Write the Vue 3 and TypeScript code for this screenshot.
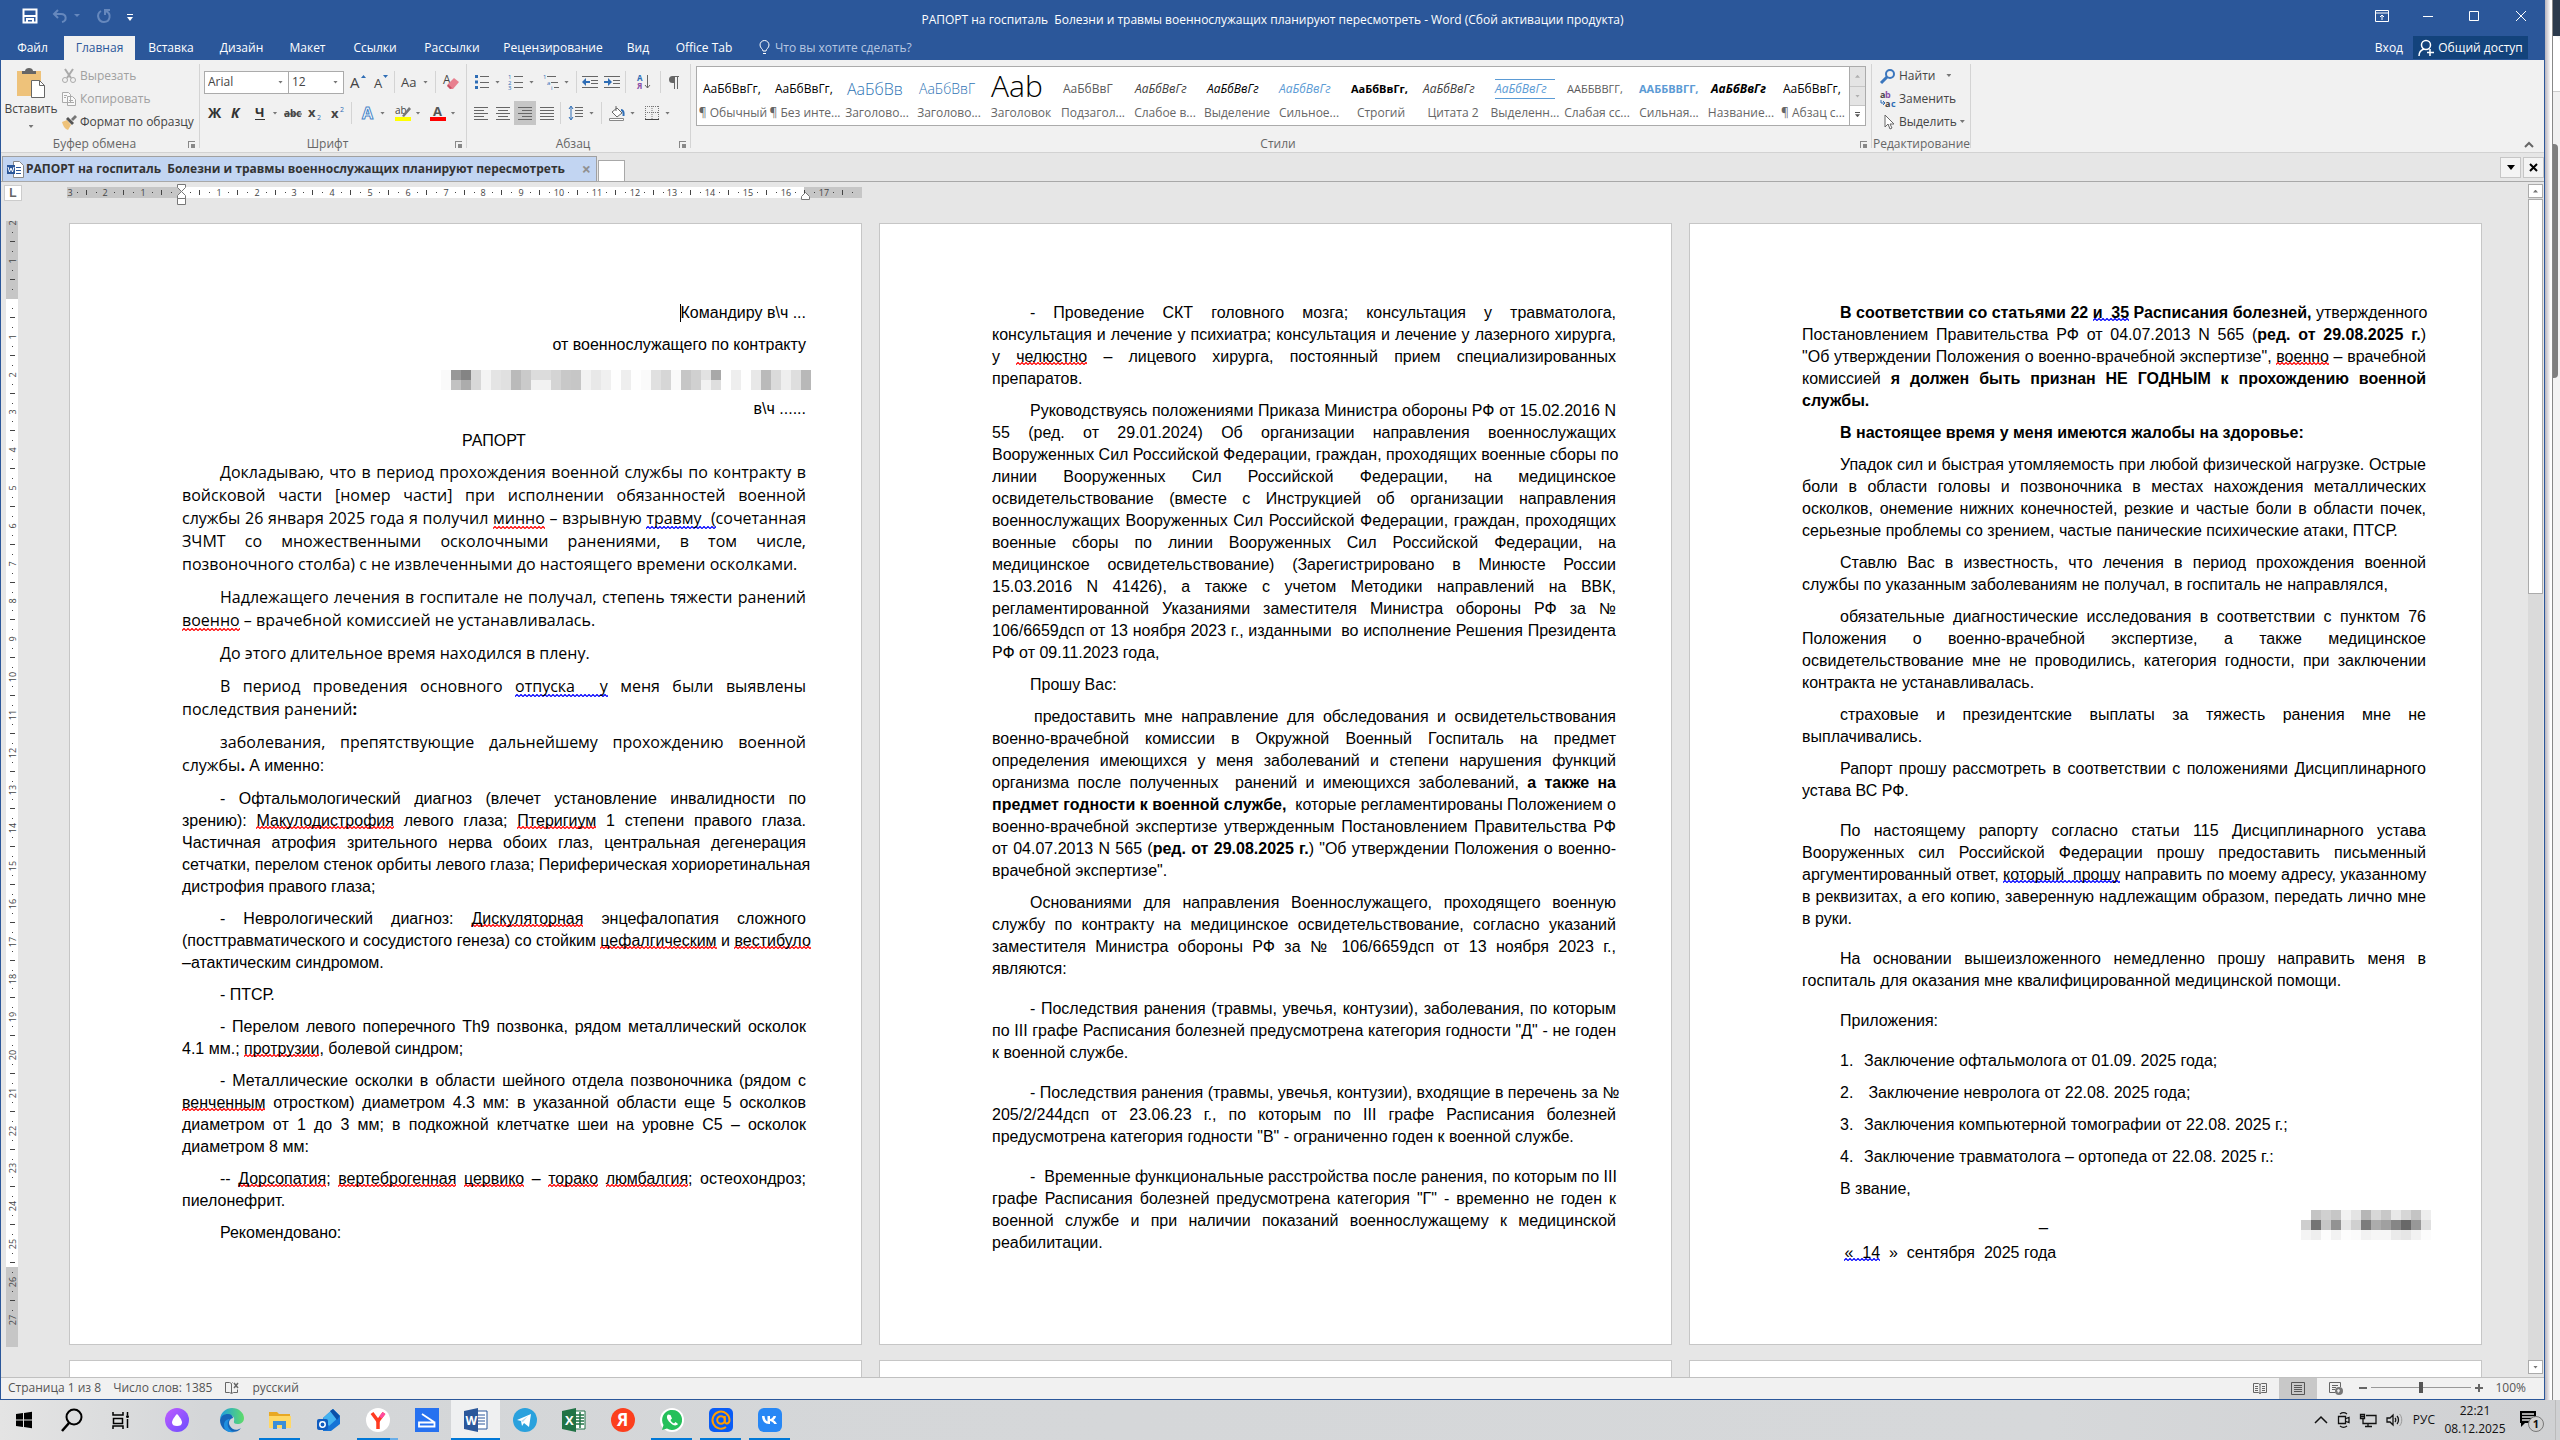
<script setup lang="ts">
import { ref } from 'vue'

interface Tool { icon?: string; w?: number; drop?: boolean; sep?: boolean; on?: boolean; label?: string }
interface Para { lines: string[]; kind?: string }
interface Seg { text: string; cls: string[] }

const docTitle = 'РАПОРТ на госпиталь\u00a0 Болезни и травмы военнослужащих планируют пересмотреть'
const tabs = ['Файл', 'Главная', 'Вставка', 'Дизайн', 'Макет', 'Ссылки', 'Рассылки', 'Рецензирование', 'Вид', 'Office Tab']
const zoom = ref(50)

const bars = (x1: number[], x2: number[]) =>
  x1.map((x, i) => `<path d="M${x} ${2.5 + i * 3}H${x2[i]}" stroke="#666"/>`).join('')

const icons: Record<string, string> = {
  grow: '<text x="0" y="14" font-size="15" fill="#444">A</text><path d="M11 4l2.500-3 2.500 3z" fill="#2e6db5"/>',
  shrink: '<text x="1" y="14" font-size="13" fill="#444">A</text><path d="M10 1h5l-2.500 3z" fill="#2e6db5"/>',
  case: '<text x="-1" y="13" font-size="13" fill="#444">Aa</text>',
  erase: '<text x="0" y="10" font-size="12" fill="#444">A</text><path d="M5 10l6-6 5 4-6 7-3 0z" fill="#e8808f"/><path d="M5 10l4 4-2 1-3-3z" fill="#c94f63"/>',
  bold: '<text x="1" y="13" font-size="14" font-weight="700" fill="#333">Ж</text>',
  italic: '<text x="3" y="13" font-size="14" font-weight="700" font-style="italic" fill="#333">К</text>',
  under: '<text x="3" y="12" font-size="13" font-weight="700" fill="#333">Ч</text><path d="M3 14.500h10" stroke="#333"/>',
  strike: '<text x="-1" y="12" font-size="10" font-weight="700" fill="#444">abc</text><path d="M-1 9h18" stroke="#444"/>',
  sub: '<text x="1" y="12" font-size="13" font-weight="700" fill="#444">x</text><text x="10" y="15" font-size="7" fill="#2e6db5">2</text>',
  sup: '<text x="1" y="13" font-size="13" font-weight="700" fill="#444">x</text><text x="10" y="7" font-size="7" fill="#2e6db5">2</text>',
  effect: '<text x="3" y="14" font-size="16" font-weight="700" fill="#fff" stroke="#4a86c8" stroke-width="1">A</text>',
  mark: '<text x="0" y="9" font-size="10" fill="#444">ab</text><path d="M7 11l7-9 2 2-7 8z" fill="#777"/><path d="M0 12h16v4H0z" fill="#ff0"/>',
  color: '<text x="3" y="11" font-size="13" font-weight="700" fill="#555">A</text><path d="M0 12h16v4H0z" fill="#f00"/>',
  bullets: '<g fill="#2e6db5"><path d="M1 1h3v3H1zM1 6.500h3v3H1zM1 12h3v3H1z"/></g><path d="M6 2.500h9M6 8.500h9M6 13.500h9" stroke="#666"/>',
  numbers: '<g font-size="6" fill="#2e6db5"><text x="0" y="5">1</text><text x="0" y="11">2</text><text x="0" y="16">3</text></g><path d="M6 2.500h9M6 8.500h9M6 13.500h9" stroke="#666"/>',
  multi: '<g font-size="6" fill="#2e6db5"><text x="0" y="5">1</text><text x="4" y="11">a</text><text x="8" y="16">i</text></g><path d="M4 2.500h9M8 8.500h7M11 13.500h5" stroke="#666"/>',
  dedent: '<path d="M0 2.500h16M9 6.500h7M9 9.500h7M0 13.500h16" stroke="#666"/><path d="M0 8l4-4v3h4v2H4v3z" fill="#2e6db5"/>',
  indent: '<path d="M0 2.500h16M9 6.500h7M9 9.500h7M0 13.500h16" stroke="#666"/><path d="M8 8L4 4v3H0v2h4v3z" fill="#2e6db5"/>',
  sort: '<text x="2" y="7" font-size="8" font-weight="700" fill="#2e6db5">А</text><text x="2" y="15" font-size="8" font-weight="700" fill="#8a4fa8">Я</text><path d="M12.500 1v13M10 11l2.500 3 2.500-3" stroke="#666" fill="none"/>',
  pilcrow: '<path d="M13 2H6.500a3.500 3.500 0 0 0 0 7H8v6h1V3h2v12h1V3h1z" fill="#666"/>',
  left: bars([1, 1, 1, 1, 1], [15, 11, 15, 11, 15]),
  center: bars([1, 3, 1, 3, 1], [15, 13, 15, 13, 15]),
  right: bars([1, 5, 1, 5, 1], [15, 15, 15, 15, 15]),
  justify: bars([1, 1, 1, 1, 1], [15, 15, 15, 15, 15]),
  spacing: '<path d="M3 2v12M1 4l2-3 2 3M1 12l2 3 2-3" stroke="#2e6db5" fill="none"/><path d="M7 2.500h8M7 5.500h8M7 8.500h8M7 11.500h8" stroke="#666"/>',
  bucket: '<path d="M7 1v5M3 7l5-4 5 5-5 4z" stroke="#666" fill="#fff"/><path d="M12 5c2 0 3 2 2.500 6" stroke="#2e6db5" stroke-width="2" fill="none"/><path d="M.5 13.500h14v2H.5z" stroke="#888" fill="#fff"/>',
  border: '<path d="M1.500 1v13M8 1v13M14.500 1v13M1 1.500h14M1 7.500h14" stroke="#777" stroke-dasharray="1 1"/><path d="M1 14.500h14" stroke="#444"/>',
  cut: '<path d="M4 1l6 9M12 1L6 10" stroke="#aaa" stroke-width="2"/><circle cx="4" cy="12" r="2.500" fill="none" stroke="#aaa"/><circle cx="12" cy="12" r="2.500" fill="none" stroke="#aaa"/>',
  copy: '<path d="M1.500 1.500h6l2 2v8h-8zM6.500 5.500h5l3 3v6h-8z" fill="#f8f8f8" stroke="#aaa"/><path d="M8 9.500h4M8 11.500h5M3 4.500h3M3 6.500h2" stroke="#aaa"/>',
  brush: '<path d="M1 8l5-2 4 5-3 5c-3-1-5-4-6-8z" fill="#eec27a"/><path d="M5 5l2-2 6 6-2 2z" fill="#555"/><path d="M10 5l4-4 2 2-4 4z" fill="#777"/>',
  find: '<circle cx="10" cy="6" r="4" fill="none" stroke="#3a76bd" stroke-width="2"/><path d="M7 9l-6 6" stroke="#3a76bd" stroke-width="3"/>',
  replace: '<text x="0" y="7" font-size="9" font-weight="700" fill="#444">a</text><text x="5" y="7" font-size="9" font-weight="700" fill="#8a4fa8">b</text><text x="5" y="16" font-size="9" font-weight="700" fill="#444">a</text><text x="11" y="16" font-size="9" font-weight="700" fill="#2e6db5">c</text><path d="M1 9v3h3M3 10l2 2-2 2" stroke="#2e6db5" fill="none"/>',
  select: '<path d="M5 1v12l3-3 2 5 2-1-2-4h4z" fill="#fff" stroke="#666"/>',
}

const fontRow1: Tool[] = [
  { icon: 'grow', w: 23, label: 'Увеличить' }, { icon: 'shrink', w: 23, label: 'Уменьшить' }, { sep: true },
  { icon: 'case', w: 36, drop: true, label: 'Регистр' }, { sep: true }, { icon: 'erase', w: 26, label: 'Очистить' },
]
const fontRow2: Tool[] = [
  { icon: 'bold', w: 21 }, { icon: 'italic', w: 22 }, { icon: 'under', w: 35, drop: true }, { icon: 'strike', w: 22 },
  { icon: 'sub', w: 22 }, { icon: 'sup', w: 23 }, { sep: true }, { icon: 'effect', w: 36, drop: true },
  { icon: 'mark', w: 35, drop: true }, { icon: 'color', w: 35, drop: true },
]
const paraRow1: Tool[] = [
  { icon: 'bullets', w: 34, drop: true }, { icon: 'numbers', w: 34, drop: true }, { icon: 'multi', w: 36, drop: true }, { sep: true },
  { icon: 'dedent', w: 22 }, { icon: 'indent', w: 22 }, { sep: true }, { icon: 'sort', w: 30 }, { sep: true }, { icon: 'pilcrow', w: 22 },
]
const paraRow2: Tool[] = [
  { icon: 'left', w: 22 }, { icon: 'center', w: 22 }, { icon: 'right', w: 22, on: true }, { icon: 'justify', w: 22 }, { sep: true },
  { icon: 'spacing', w: 36, drop: true }, { sep: true }, { icon: 'bucket', w: 36, drop: true }, { icon: 'border', w: 34, drop: true },
]
const styles = [
  ['АаБбВвГг,', '¶ Обычный', ''], ['АаБбВвГг,', '¶ Без инте...', ''], ['АаБбВв', 'Заголово...', 'h1'], ['АаБбВвГ', 'Заголово...', 'h2'],
  ['Ааb', 'Заголовок', 'title'], ['АаБбВвГ', 'Подзагол...', 'grey'], ['АаБбВвГг', 'Слабое в...', 'it soft'], ['АаБбВвГг', 'Выделение', 'it'],
  ['АаБбВвГг', 'Сильное...', 'it blue'], ['АаБбВвГг,', 'Строгий', 'b small'], ['АаБбВвГг', 'Цитата 2', 'it soft'], ['АаБбВвГг', 'Выделенн...', 'it blue lines'],
  ['ААББВВГГ,', 'Слабая сс...', 'grey small'], ['ААББВВГГ,', 'Сильная...', 'blue b small'], ['АаБбВвГг', 'Название...', 'it b'], ['АаБбВвГг,', '¶ Абзац с...', ''],
]

/* Inline marks: ~spelling~, ^grammar^, *bold*, #Arial# */
function parse(line: string): Seg[] {
  const state: Record<string, boolean> = { '~': false, '^': false, '*': false, '#': false }
  const name: Record<string, string> = { '~': 'spell', '^': 'gram', '*': 'bold', '#': 'arial' }
  const out: Seg[] = []
  for (const part of line.split(/([~^*#])/)) {
    if (part in state) state[part] = !state[part]
    else if (part) out.push({ text: part.replace(/ {2}/g, '\u00a0 '), cls: Object.keys(state).filter(k => state[k]).map(k => name[k]) })
  }
  return out
}

const page1: Para[] = [
  { kind: 'loose', lines: ['Докладываю, что в период прохождения военной службы по контракту в', 'войсковой части [номер части] при исполнении обязанностей военной', 'службы 26 января 2025 года я получил ~минно~ – взрывную ^травму  (^сочетанная', 'ЗЧМТ со множественными осколочными ранениями, в том числе,', 'позвоночного столба) с не извлеченными до настоящего времени осколками.'] },
  { kind: 'loose', lines: ['Надлежащего лечения в госпитале не получал, степень тяжести ранений', '~военно~ – врачебной комиссией не устанавливалась.'] },
  { kind: 'loose', lines: ['До этого длительное время находился в плену.'] },
  { kind: 'loose', lines: ['В период проведения основного ^отпуска   у^ меня были выявлены', 'последствия ранений*:*'] },
  { kind: 'loose last', lines: ['заболевания, препятствующие дальнейшему прохождению военной', 'службы*.* #А именно:#'] },
  { lines: ['- Офтальмологический диагноз (влечет установление инвалидности по', 'зрению): ~Макулодистрофия~ левого глаза; ~Птеригиум~ 1 степени правого глаза.', 'Частичная атрофия зрительного нерва обоих глаз, центральная дегенерация', 'сетчатки, перелом стенок орбиты левого глаза; Периферическая хориоретинальная', 'дистрофия правого глаза;'] },
  { lines: ['- Неврологический диагноз: ~Дискуляторная~ энцефалопатия сложного', '(посттравматического и сосудистого генеза) со стойким ~цефалгическим~ и ~вестибуло~', '–атактическим синдромом.'] },
  { lines: ['- ПТСР.'] },
  { lines: ['- Перелом левого поперечного Th9 позвонка, рядом металлический осколок', '4.1 мм.; ~протрузии~, болевой синдром;'] },
  { lines: ['- Металлические осколки в области шейного отдела позвоночника (рядом с', '~венченным~ отростком) диаметром 4.3 мм: в указанной области еще 5 осколков', 'диаметром от 1 до 3 мм; в подкожной клетчатке шеи на уровне С5 – осколок', 'диаметром 8 мм:'] },
  { lines: ['-- ~Дорсопатия~; ~вертеброгенная~ ~цервико~ – ~торако~ ~люмбалгия~; остеохондроз;', 'пиелонефрит.'] },
  { lines: ['Рекомендовано:'] },
]
const page2: Para[] = [
  { lines: ['- Проведение СКТ головного мозга; консультация у травматолога,', 'консультация и лечение у психиатра; консультация и лечение у лазерного хирурга,', 'у ~челюстно~ – лицевого хирурга, постоянный прием специализированных', 'препаратов.'] },
  { lines: ['Руководствуясь положениями Приказа Министра обороны РФ от 15.02.2016 N', '55 (ред. от 29.01.2024) Об организации направления военнослужащих', 'Вооруженных Сил Российской Федерации, граждан, проходящих военные сборы по', 'линии Вооруженных Сил Российской Федерации, на медицинское', 'освидетельствование (вместе с Инструкцией об организации направления', 'военнослужащих Вооруженных Сил Российской Федерации, граждан, проходящих', 'военные сборы по линии Вооруженных Сил Российской Федерации, на', 'медицинское освидетельствование) (Зарегистрировано в Минюсте России', '15.03.2016 N 41426), а также с учетом Методики направлений на ВВК,', 'регламентированной Указаниями заместителя Министра обороны РФ за №', '106/6659дсп от 13 ноября 2023 г., изданными  во исполнение Решения Президента', 'РФ от 09.11.2023 года,'] },
  { lines: ['Прошу Вас:'] },
  { lines: ['\u2005предоставить мне направление для обследования и освидетельствования', 'военно-врачебной комиссии в Окружной Военный Госпиталь на предмет', 'определения имеющихся у меня заболеваний и степени нарушения функций', 'организма после полученных  ранений и имеющихся заболеваний, *а также на*', '*предмет годности к военной службе,*  которые регламентированы Положением о', 'военно-врачебной экспертизе утвержденным Постановлением Правительства РФ', 'от 04.07.2013 N 565 (*ред. от 29.08.2025 г.*) "Об утверждении Положения о военно-', 'врачебной экспертизе".'] },
  { kind: 'wide', lines: ['Основаниями для направления Военнослужащего, проходящего военную', 'службу по контракту на медицинское освидетельствование, согласно указаний', 'заместителя Министра обороны РФ за № 106/6659дсп от 13 ноября 2023 г.,', 'являются:'] },
  { kind: 'wide', lines: ['- Последствия ранения (травмы, увечья, контузии), заболевания, по которым', 'по III графе Расписания болезней предусмотрена категория годности "Д" - не годен', 'к военной службе.'] },
  { kind: 'wide', lines: ['- Последствия ранения (травмы, увечья, контузии), входящие в перечень за №', '205/2/244дсп от 23.06.23 г., по которым по III графе Расписания болезней', 'предусмотрена категория годности "В" - ограниченно годен к военной службе.'] },
  { lines: ['-  Временные функциональные расстройства после ранения, по которым по III', 'графе Расписания болезней предусмотрена категория "Г" - временно не годен к', 'военной службе и при наличии показаний военнослужащему к медицинской', 'реабилитации.'] },
]
const page3: Para[] = [
  { lines: ['*В соответствии со статьями 22 ^и  35^ Расписания болезней,* утвержденного', 'Постановлением Правительства РФ от 04.07.2013 N 565 (*ред. от 29.08.2025 г.*)', '"Об утверждении Положения о военно-врачебной экспертизе", ~военно~ – врачебной', 'комиссией *я должен быть признан НЕ ГОДНЫМ к прохождению военной*', '*службы.*'] },
  { lines: ['*В настоящее время у меня имеются жалобы на здоровье:*'] },
  { lines: ['Упадок сил и быстрая утомляемость при любой физической нагрузке. Острые', 'боли в области головы и позвоночника в местах нахождения металлических', 'осколков, онемение нижних конечностей, резкие и частые боли в области почек,', 'серьезные проблемы со зрением, частые панические психические атаки, ПТСР.'] },
  { lines: ['Ставлю Вас в известность, что лечения в период прохождения военной', 'службы по указанным заболеваниям не получал, в госпиталь не направлялся,'] },
  { lines: ['обязательные диагностические исследования в соответствии с пунктом 76', 'Положения о военно-врачебной экспертизе, а также медицинское', 'освидетельствование мне не проводились, категория годности, при заключении', 'контракта не устанавливалась.'] },
  { lines: ['страховые и президентские выплаты за тяжесть ранения мне не', 'выплачивались.'] },
  { kind: 'wide', lines: ['Рапорт прошу рассмотреть в соответствии с положениями Дисциплинарного', 'устава ВС РФ.'] },
  { kind: 'wide', lines: ['По настоящему рапорту согласно статьи 115 Дисциплинарного устава', 'Вооруженных сил Российской Федерации прошу предоставить письменный', 'аргументированный ответ, ^который  прошу^ направить по моему адресу, указанному', 'в реквизитах, а его копию, заверенную надлежащим образом, передать лично мне', 'в руки.'] },
  { kind: 'wide', lines: ['На основании вышеизложенного немедленно прошу направить меня в', 'госпиталь для оказания мне квалифицированной медицинской помощи.'] },
  { kind: 'wide', lines: ['Приложения:'] },
]
const pages = [page1, page2, page3]
const attachments = ['Заключение офтальмолога от 01.09. 2025 года;', '\u00a0Заключение невролога от 22.08. 2025 года;', 'Заключения компьютерной томографии от 22.08. 2025 г.;', 'Заключение травматолога – ортопеда от 22.08. 2025 г.:']

const shade = (row: string) => row.split(' ').map(h => `#${h}${h}${h}`)
const mosaicName = [
  shade('fa 98 84 d8 f4 e4 e0 ba ca dc dc d4 c8 c6 f2 e8 f0 fe ee fe fa e0 d6 fa c6 d0 e2 a8 fe ee fe e8 ba da ee de b8'),
  shade('fa c2 ac d8 f4 e4 e0 ba ca f2 f2 d4 c8 c6 f2 e8 f0 fe ee fe fa e0 d6 fa c6 d0 f2 de fe ee fe e8 ba da ee de b8'),
]
const mosaicSign = [
  shade('ff c4 d0 c6 f2 e4 b6 d8 c8 e8 d6 c4 ee'),
  shade('ce 74 c6 92 e6 d0 7c ac a0 86 68 98 e0'),
  shade('f4 ee fc f2 fd fb f2 f6 f6 ea e6 f2 fc'),
]

const CM = 37.8
const hTicks = Array.from({ length: 21 }, (_, i) => i - 3)
const vTicks = Array.from({ length: 30 }, (_, i) => i - 2)

const apps = [
  { id: 'start', run: '' }, { id: 'search', run: '' }, { id: 'tasks', run: '' }, { id: 'alice', run: '' }, { id: 'edge', run: '' },
  { id: 'folder', run: 'run' }, { id: 'outlook', run: '' }, { id: 'browser', run: 'run multi' }, { id: 'scan', run: '' }, { id: 'word', run: 'run active' },
  { id: 'telegram', run: '' }, { id: 'excel', run: '' }, { id: 'yandex', run: '' }, { id: 'whatsapp', run: 'run' }, { id: 'mail', run: 'run' }, { id: 'vk', run: 'run' },
]
const appIcons: Record<string, string> = {
  start: '<path d="M4 6l7-1v6.500H4zM12 5l8-1.200v7.700h-8zM4 12.500h7V19l-7-1zM12 12.500h8v7.700L12 19z" fill="#000"/>',
  search: '<circle cx="14" cy="9" r="7.500" fill="none" stroke="#000" stroke-width="2"/><path d="M9 15l-7 8" stroke="#000" stroke-width="2.500"/>',
  tasks: '<path d="M4 4v3h10V4M4.500 10.500h9v5h-9zM4 21v-3h10v3" fill="none" stroke="#000" stroke-width="1.500"/><path d="M18.500 4v3M18.500 11v9" stroke="#000" stroke-width="1.500"/><circle cx="18.500" cy="8.500" r="1.500"/>',
  alice: '<defs><linearGradient id="al" x1="0" y1="0" x2="1" y2="1"><stop offset="0" stop-color="#c05cff"/><stop offset="1" stop-color="#6a4dff"/></linearGradient></defs><circle cx="12" cy="12" r="12" fill="url(#al)"/><path d="M12 6c2 2 5 6 5 8.500S15 18 12 18s-5-1-5-3.500S10 8 12 6z" fill="#fff"/>',
  edge: '<defs><linearGradient id="ed" x1="0" y1="0" x2="1" y2="0"><stop offset="0" stop-color="#1b9de2"/><stop offset="1" stop-color="#5fdc68"/></linearGradient></defs><path d="M0 11C1 4 6 0 12 0c7 0 12 5 12 10 0 4-3 6-6.500 6-3 0-4-1-3.500-3 1-3-1-6-5-6-5 0-8 3-9 4z" fill="url(#ed)"/><path d="M0 12c1-4 4-6 8-6 3 0 5 2 5 4-4 1-5 5-3 8 2 4 7 5 11 2-2 3-5 4-9 4C5 24 0 19 0 12z" fill="#1565b8"/><path d="M10 11c-4 3-3 11 4 13-7 1-10-2-10-7 0-4 3-6 6-6z" fill="#1f8fe0"/>',
  folder: '<path d="M1 4h8l2 2h11v14H1z" fill="#e8a824"/><path d="M1 8h22v12H1z" fill="#ffd866"/><path d="M5 21v-8h13v8h-4v-4H9v4z" fill="#3b8fd9"/>',
  outlook: '<path d="M6 10L16 1l7 7v8l-9 7H6z" fill="#1673d6"/><path d="M6 10L16 1l7 7-11 10z" fill="#43b2f0"/><path d="M13 3l3-2 7 7-3 4z" fill="#0a4fa8"/><rect x="0" y="11" width="11" height="11" rx="2" fill="#0f5cc0"/><circle cx="5.500" cy="16.500" r="2.700" fill="none" stroke="#fff" stroke-width="1.500"/>',
  browser: '<circle cx="12" cy="12" r="12" fill="#fff"/><path d="M6 5l6 8 6-8" fill="none" stroke="#ff3b21" stroke-width="3.500"/><path d="M12 12v9" stroke="#ff3b21" stroke-width="3.500"/><path d="M14.500 9.500l3.500-4.500" stroke="#ff4ba0" stroke-width="3.500"/>',
  scan: '<path d="M0 0h24v24H0z" fill="#2671f0"/><path d="M7 6l12 8M4 14.500h15.500v4H4z" stroke="#fff" stroke-width="1.800" fill="none"/>',
  word: '<path d="M13 3h10v18H13z" fill="#fff" stroke="#2b579a"/><path d="M14 7h7M14 10h7M14 13h7M14 16h7" stroke="#2b579a"/><path d="M0 3l14-3v24L0 21z" fill="#2b579a"/><text x="1.500" y="17" font-size="12" font-weight="700" fill="#fff">W</text>',
  telegram: '<circle cx="12" cy="12" r="12" fill="#2aa1dd"/><path d="M4 12l14-6-2 13-5-4-2 3-1-5z" fill="#fff"/><path d="M8 13l7-5-5 6z" fill="#b8d9ee"/>',
  excel: '<path d="M13 3h10v18H13z" fill="#fff" stroke="#217346"/><path d="M14 7h8M14 10h8M14 13h8M14 16h8M18 4v16" stroke="#217346" stroke-width="1.500"/><path d="M0 3l14-3v24L0 21z" fill="#217346"/><text x="3" y="17" font-size="13" font-weight="700" fill="#fff">X</text>',
  yandex: '<circle cx="12" cy="12" r="12" fill="#fc3f1d"/><text x="6" y="18" font-size="17" font-weight="700" fill="#fff">Я</text>',
  whatsapp: '<circle cx="12" cy="12" r="12" fill="#fff"/><path d="M2 22l1.500-5A10 10 0 1 1 7 20.500z" fill="#25c05a"/><path d="M8 6.500c-2 2-1 5 2 8s6 4 8 1.500l-2.500-2-1.500 1.500c-2-1-3-2-3.500-3.500L12 10.500l-1.500-3.500z" fill="#fff"/>',
  mail: '<rect width="24" height="24" rx="5" fill="#0a5cf5"/><circle cx="12" cy="12" r="3.800" fill="none" stroke="#ff9e00" stroke-width="2"/><path d="M15.800 8v5c0 4 4.700 3 4.700-1a8.500 8.500 0 1 0-3.500 7" fill="none" stroke="#ff9e00" stroke-width="2"/>',
  vk: '<rect width="24" height="24" rx="6" fill="#2787f5"/><path d="M4 8h2.500c.3 3 1.500 5 3 5.500V8h2.500v3c1.500 0 3-1.500 3.500-3H18c-.3 2-1.500 3.500-2.700 4 1.500.7 2.700 2 3.700 4h-2.800c-.7-1.500-2-2.500-4.200-3v3h-1C7 16 4.200 13 4 8z" fill="#fff"/>',
}
</script>

<template>
  <div class="screen">
    <div class="desk">
      <main class="window">
        <header class="titlebar">
          <div class="title-row">
            <div class="qat">
              <button aria-label="Сохранить"><svg width="16" height="16"><path d="M1.500 1.500h13v13h-13z" fill="none" stroke="#fff" stroke-width="2" /><path d="M2 8h12M5 15v-4h6v4" stroke="#fff" stroke-width="2" fill="none" /></svg></button>
              <button aria-label="Отменить"><svg width="30" height="16"><path d="M6 2L2 6l4 4M2 6h7c6 0 6 7 1 8" fill="none" stroke="#6688bd" stroke-width="2" /><path d="M22 6h6l-3 3z" fill="#6688bd" /></svg></button>
              <button aria-label="Повторить"><svg width="16" height="16"><path d="M5 3C0 6 2 14 8 14s8-8 2-11M9 7V2h5" fill="none" stroke="#6688bd" stroke-width="2" /></svg></button>
              <button aria-label="Настроить"><svg width="8" height="16"><path d="M1 6.500h6" stroke="#fff" /><path d="M1 9h6l-3 4z" fill="#fff" /></svg></button>
            </div>
            <h1>{{ docTitle }} - Word (Сбой активации продукта)</h1>
            <div class="winbtns">
              <button aria-label="Параметры ленты"><svg width="14" height="12"><path d="M.5.500h13v11H.5zM.5 3h13M7 10V5M5 7l2-2 2 2" fill="none" stroke="#fff" /></svg></button>
              <button aria-label="Свернуть"><svg width="12" height="12"><path d="M1 6.500h10" stroke="#fff" /></svg></button>
              <button aria-label="Развернуть"><svg width="12" height="12"><path d="M1.500 1.500h9v9h-9z" fill="none" stroke="#fff" /></svg></button>
              <button aria-label="Закрыть"><svg width="12" height="12"><path d="M1 1l10 10M11 1L1 11" stroke="#fff" /></svg></button>
            </div>
          </div>
          <div class="tab-row">
            <nav class="tabs">
              <button v-for="(t, i) in tabs" :key="t" :class="{ active: i === 1 }">{{ t }}</button>
            </nav>
            <label class="tell">
              <svg width="12" height="16"><path d="M4 11c0-2-3-3-3-6a4.500 4.500 0 0 1 9 0c0 3-3 4-3 6zM4 13.500h3" fill="none" stroke="#fff" /></svg>
              <input type="text" placeholder="Что вы хотите сделать?" aria-label="Что вы хотите сделать?" />
            </label>
            <button class="login">Вход</button>
            <button class="share"><svg width="16" height="18"><circle cx="8" cy="6" r="4.500" fill="none" stroke="#fff" stroke-width="1.500" /><path d="M1 17c0-4 2-6 5-7M12 10v7M9 13.500h7" fill="none" stroke="#fff" stroke-width="1.500" /></svg>Общий доступ</button>
          </div>
        </header>

        <section class="ribbon">
          <div class="group clip">
            <div class="clip-body">
              <button class="paste">
                <svg width="30" height="32"><path d="M1 4h24v25H1z" fill="#eec27a" /><path d="M6 7V4h3c0-4 8-4 8 0h3v3z" fill="#666" /><path d="M15.500 13.500h8l5 5v12h-13z" fill="#fff" stroke="#666" /><path d="M23.500 13.500v5h5" fill="none" stroke="#666" /></svg>
                <span>Вставить</span><i class="arr"></i>
              </button>
              <div class="stack">
                <button class="dim"><svg width="16" height="16" v-html="icons.cut" />Вырезать</button>
                <button class="dim"><svg width="16" height="16" v-html="icons.copy" />Копировать</button>
                <button><svg width="16" height="16" v-html="icons.brush" />Формат по образцу</button>
              </div>
            </div>
            <footer><span>Буфер обмена</span><i class="launch"></i></footer>
          </div>

          <div class="group font">
            <div class="rows">
              <div class="row">
                <span class="combo name"><select aria-label="Шрифт"><option>Arial</option></select><i class="arr"></i></span>
                <span class="combo size"><select aria-label="Размер"><option>12</option></select><i class="arr"></i></span>
                <template v-for="(b, i) in fontRow1" :key="i">
                  <i v-if="b.sep" class="sep"></i>
                  <button v-else class="tool" :aria-label="b.icon" :style="{ width: b.w + 'px' }"><svg width="16" height="16" v-html="icons[b.icon!]" /><i v-if="b.drop" class="arr"></i></button>
                </template>
              </div>
              <div class="row">
                <template v-for="(b, i) in fontRow2" :key="i">
                  <i v-if="b.sep" class="sep"></i>
                  <button v-else class="tool" :aria-label="b.icon" :style="{ width: b.w + 'px' }"><svg width="16" height="16" v-html="icons[b.icon!]" /><i v-if="b.drop" class="arr"></i></button>
                </template>
              </div>
            </div>
            <footer><span>Шрифт</span><i class="launch"></i></footer>
          </div>

          <div class="group para">
            <div class="rows">
              <div v-for="(r, k) in [paraRow1, paraRow2]" :key="k" class="row">
                <template v-for="(b, i) in r" :key="i">
                  <i v-if="b.sep" class="sep"></i>
                  <button v-else class="tool" :class="{ on: b.on }" :aria-label="b.icon" :style="{ width: b.w + 'px' }"><svg width="16" height="16" v-html="icons[b.icon!]" /><i v-if="b.drop" class="arr"></i></button>
                </template>
              </div>
            </div>
            <footer><span>Абзац</span><i class="launch"></i></footer>
          </div>

          <div class="group styles">
            <div class="gallery">
              <button v-for="(s, i) in styles" :key="i" class="style"><span class="sample" :class="s[2]">{{ s[0] }}</span><span class="cap">{{ s[1] }}</span></button>
              <div class="gscroll"><button aria-label="Вверх"><i class="arr up"></i></button><button aria-label="Вниз"><i class="arr"></i></button><button aria-label="Все стили" class="more"><i class="arr"></i></button></div>
            </div>
            <footer><span>Стили</span><i class="launch"></i></footer>
          </div>

          <div class="group edit">
            <div class="stack">
              <button><svg width="16" height="16" v-html="icons.find" />Найти<i class="arr gap"></i></button>
              <button><svg width="16" height="16" v-html="icons.replace" />Заменить</button>
              <button><svg width="16" height="16" v-html="icons.select" />Выделить<i class="arr"></i></button>
            </div>
            <footer><span>Редактирование</span></footer>
          </div>
          <button class="collapse" aria-label="Свернуть ленту"><svg width="10" height="8"><path d="M1 7l4-4 4 4" fill="none" stroke="#666" stroke-width="2" /></svg></button>
        </section>

        <div class="doctabs">
          <div class="doctab">
            <svg width="17" height="17"><path d="M6.500.500h6l4 4v12h-10z" fill="#fff" stroke="#888" /><path d="M9 6.500h5M9 9.500h5M9 12.500h5" stroke="#2b579a" /><path d="M0 4h8v9H0z" fill="#2b579a" /><path d="M1 6l1.500 5L4 7l1.500 4L7 6" fill="none" stroke="#fff" /></svg>
            <span>{{ docTitle }}</span><button aria-label="Закрыть вкладку">×</button>
          </div>
          <button class="newtab" aria-label="Новая вкладка"></button>
          <div class="tabctl"><button aria-label="Список"><svg width="8" height="5"><path d="M0 0h8L4 5z" /></svg></button><button aria-label="Закрыть"><svg width="9" height="9"><path d="M1 1l7 7M8 1L1 8" stroke="#000" stroke-width="2" /></svg></button></div>
        </div>

        <section class="work">
          <div class="vruler">
            <button class="tabsel" aria-label="Табуляция">L</button>
            <svg class="vr" width="12" height="1126">
              <rect width="12" height="78" fill="#c6c6c6" /><rect y="78" width="12" height="968" fill="#fff" /><rect y="1046" width="12" height="80" fill="#c6c6c6" />
              <g v-for="n in vTicks" :key="n" :transform="`translate(0 ${Math.round(78 + n * CM)})`">
                <text v-if="n" transform="translate(10 0) rotate(-90)" text-anchor="middle">{{ Math.abs(n) }}</text>
                <path v-if="n < 27" d="M6 9.500h1M4 18.500h5M6 28.500h1" stroke="#444" />
              </g>
            </svg>
          </div>
          <div class="canvas">
            <svg class="hr" width="798" height="24">
              <rect y="3" width="114" height="11" fill="#c6c6c6" /><rect x="114" y="3" width="623" height="11" fill="#fff" /><rect x="737" y="3" width="58" height="11" fill="#c6c6c6" />
              <g v-for="n in hTicks" :key="n" :transform="`translate(${Math.round(114 + n * CM)} 0)`">
                <text v-if="n" :x="n === -3 ? 2 : 0" y="12" text-anchor="middle">{{ Math.abs(n) }}</text>
                <path d="M9.500 8v1M18.500 6v5M28.500 8v1" stroke="#444" />
              </g>
              <path d="M110.500.500h8v3l-4 4 4 4v3h-8v-3l4-4-4-4zM110.500 14.500h8v6h-8z" fill="#fff" stroke="#777" />
              <path d="M734.500 15.500v-3l4-4 4 4v3z" fill="#fff" stroke="#777" />
            </svg>
            <div class="pages">
              <article v-for="(pg, k) in pages" :key="k" class="page">
                <template v-if="k === 0">
                  <p class="r"><i class="caret"></i>Командиру в\ч ...</p>
                  <p class="r">от военнослужащего по контракту</p>
                  <div class="hidden-name"><div v-for="(row, r) in mosaicName" :key="r" class="mrow"><i v-for="(c, i) in row" :key="i" :style="{ background: c }"></i></div></div>
                  <p class="r">в\ч ......</p>
                  <p class="c">РАПОРТ</p>
                </template>
                <p v-for="(p, i) in pg" :key="i" :class="p.kind">
                  <span v-for="(l, j) in p.lines" :key="j" class="line"><span v-for="(s, m) in parse(l)" :key="m" :class="s.cls">{{ s.text }}</span></span>
                </p>
                <template v-if="k === 2">
                  <ol><li v-for="(a, i) in attachments" :key="i"><span class="num">{{ i + 1 }}.</span>{{ a }}</li></ol>
                  <p class="in">В звание,</p>
                  <div class="sign"><span>_</span>
                    <div class="signature"><div v-for="(row, r) in mosaicSign" :key="r" class="mrow"><i v-for="(c, i) in row" :key="i" :style="{ background: c }"></i></div></div>
                  </div>
                  <p class="in">&nbsp;<span class="gram">«&nbsp; 14</span>&nbsp; »&nbsp; сентября&nbsp; 2025 года</p>
                </template>
              </article>
              <article v-for="k in 3" :key="'n' + k" class="page"></article>
            </div>
          </div>
          <div class="vscroll"><button aria-label="Вверх"><i class="arr up"></i></button><div class="track"><div class="thumb"></div></div><button aria-label="Вниз"><i class="arr"></i></button></div>
        </section>

        <footer class="status">
          <span>Страница 1 из 8</span><span>Число слов: 1385</span>
          <svg width="16" height="14"><path d="M1.500 1.500h4l2 1 1-1M1.500 1.500v10h4l2 1 2-1h4v-3M7.500 3v9" fill="none" stroke="#666" /><path d="M10 2l4 5M14 2l-4 5" stroke="#666" stroke-width="1.500" /></svg>
          <span>русский</span>
          <div class="views">
            <button aria-label="Чтение"><svg width="14" height="13"><path d="M.5 1.500h5l1.500 1 1.500-1h5v9h-5l-1.500 1-1.500-1h-5zM7 2v10M2 4.500h3M2 6.500h3M2 8.500h3M9 4.500h3M9 6.500h3M9 8.500h3" fill="none" stroke="#666" /></svg></button>
            <button class="on" aria-label="Разметка"><svg width="14" height="13"><path d="M.5.500h13v12H.5zM3 3.500h8M3 5.500h8M3 7.500h8M3 9.500h8" fill="none" stroke="#555" /></svg></button>
            <button aria-label="Веб"><svg width="14" height="13"><path d="M11.500 5V.500H.5v10h6M3 3.500h6M3 5.500h4M3 7.500h3" fill="none" stroke="#666" /><circle cx="10" cy="9" r="4" fill="#777" /><path d="M8 8l2-1 1 2-2 2z" fill="#eee" /></svg></button>
          </div>
          <div class="zoom"><button aria-label="Мельче"><svg width="8" height="8"><path d="M0 4h8" stroke="#666" stroke-width="2" /></svg></button><input v-model="zoom" type="range" min="0" max="100" aria-label="Масштаб" /><button aria-label="Крупнее"><svg width="8" height="8"><path d="M0 4h8M4 0v8" stroke="#666" stroke-width="2" /></svg></button><span>100%</span></div>
        </footer>
      </main>
      <aside class="behind"><div class="edge-strip"></div><div class="other"><i class="dark"></i><i class="head"></i><i class="gut"></i><i class="bar"></i></div></aside>
    </div>

    <footer class="taskbar">
      <button v-for="a in apps" :key="a.id" class="app" :class="[a.id, a.run]" :aria-label="a.id"><svg width="24" height="24" viewBox="0 0 24 24" v-html="appIcons[a.id]" /></button>
      <div class="tray">
        <svg width="14" height="14"><path d="M1 10l6-6 6 6" fill="none" stroke="#111" stroke-width="1.500" /></svg>
        <svg width="14" height="16"><path d="M1.500 4.500h7v7h-7zM9 6.500l3-1v5l-3-1M3 2c2-1.500 5-1.500 7 0M3 14c2 1.500 5 1.500 7 0" fill="none" stroke="#111" stroke-width="1.300" /></svg>
        <svg width="17" height="16"><path d="M6 3.500h10v8H3V7M8 12v3M5 14.500h7M.5 2.500h4v4h-4zM1 4.500h3" fill="none" stroke="#111" stroke-width="1.300" /></svg>
        <svg width="18" height="16"><path d="M1 6h3l3-3v10l-3-3H1zM9 6c1 1 1 3 0 4M11 4c2 2 2 6 0 8" fill="none" stroke="#111" stroke-width="1.300" /><path d="M13.500 2c3 3 3 9 0 12" fill="none" stroke="#999" /></svg>
        <span class="lang">РУС</span>
        <span class="clock"><time>22:21</time><time>08.12.2025</time></span>
        <span class="note"><svg width="18" height="18"><path d="M1 1h16v12H6l-4 4v-4H1z" /><path d="M3 4h12M3 7h12M3 10h8" stroke="#ddd" stroke-width="1.300" /></svg><b>1</b></span>
      </div>
    </footer>
  </div>
</template>

<style>
html, body { margin: 0; overflow: hidden; }
</style>

<style scoped>
.screen { display: flex; flex-direction: column; height: 100vh; font: 12px/16px "Open Sans", "Noto Sans", sans-serif; color: #444; background: #d6d7d9; }
.screen * { box-sizing: border-box; }
button { font: inherit; color: inherit; background: none; border: 0; padding: 0; margin: 0; display: flex; align-items: center; justify-content: center; white-space: nowrap; }
svg { display: block; flex: none; overflow: visible; }
.desk { flex: 1; min-height: 0; display: flex; }
.window { flex: 1; min-width: 0; display: flex; flex-direction: column; border: 1px solid #2b579a; border-top: 0; background: #e6e6e6; }

.titlebar { background: #2b579a; color: #fff; height: 60px; flex: none; display: flex; flex-direction: column; }
.title-row { height: 36px; display: grid; grid-template-columns: 1fr auto 1fr; }
.title-row h1 { font-size: 12px; line-height: 16px; font-weight: 400; margin: 12px 0 0; white-space: nowrap; }
.qat { display: flex; align-items: center; padding: 0 0 4px 21px; gap: 14px; }
.winbtns { display: flex; justify-content: flex-end; padding: 0 11px 4px 0; }
.winbtns button { width: 46px; }
.winbtns button:last-child { width: 24px; margin-left: 12px; }
.tab-row { height: 24px; display: flex; }
.tabs { display: grid; grid-template-columns: 63px 71px 72px 69px 63px 72px 82px 120px 50px 82px; padding-bottom: 0; }
.tabs .active { background: #f1f1f1; color: #2b579a; }
.tell { display: flex; align-items: center; gap: 4px; margin-left: 14px; flex: 1; }
.tell input { font: inherit; border: 0; background: none; width: 200px; padding: 0; color: #fff; }
.tell input::placeholder { color: #b8c8e2; opacity: 1; }
.login { margin-right: 10px; }
.share { background: #13437c; width: 115px; height: 23px; margin-right: 16px; gap: 4px; }

.ribbon { height: 93px; flex: none; display: flex; background: #f1f1f1; border-bottom: 1px solid #d2d2d2; }
.group { position: relative; display: flex; flex-direction: column; padding-top: 4px; flex: none; }
.group::after { content: ""; position: absolute; right: 0; top: 4px; bottom: 4px; width: 1px; background: #d4d4d4; }
.group footer { margin-top: auto; display: flex; align-items: center; height: 16px; color: #666; padding-right: 5px; }
.group footer span { flex: 1; text-align: center; }
.launch { width: 7px; height: 7px; border: 1px solid #888; border-right: 0; border-bottom: 0; background: linear-gradient(#888, #888) right bottom / 4px 4px no-repeat; }
.clip { width: 199px; }
.clip-body { display: flex; }
.paste { flex-direction: column; width: 60px; color: #444; justify-content: flex-start; padding-top: 3px; gap: 2px; }
.stack { display: flex; flex-direction: column; }
.stack button { height: 23px; justify-content: flex-start; gap: 3px; }
.dim { color: #a0a0a0; }
.paste .arr { margin-top: 6px; }
.arr { width: 5px; height: 3px; background: #777; clip-path: polygon(0 0, 100% 0, 50% 100%); flex: none; }
.arr.up { clip-path: polygon(0 100%, 100% 100%, 50% 0); }
.arr.gap { margin-left: 8px; }
.font { width: 267px; }
.para { width: 224px; }
.rows { padding: 6px 0 0 4px; display: flex; flex-direction: column; gap: 7px; }
.para .rows { padding-left: 3px; }
.row { display: flex; height: 24px; align-items: center; }
.tool { height: 24px; gap: 5px; }
.tool.on { background: #c6c6c6; }
.sep { width: 1px; height: 22px; background: #d4d4d4; margin: 0 2px; flex: none; }
.combo { display: flex; align-items: center; height: 23px; border: 1px solid #ababab; background: #fff; padding-right: 5px; }
.combo select { flex: 1; min-width: 0; appearance: none; border: 0; background: none; font: inherit; color: #444; padding: 0 0 0 3px; }
.combo.name { width: 85px; }
.combo.size { width: 56px; margin-left: -1px; margin-right: 2px; }
.styles { width: 1181px; padding-left: 5px; }
.gallery { display: flex; height: 60px; margin: 2px 6px 0 0; border: 1px solid #ababab; background: #fff; }
.style { width: 72px; flex: none; flex-direction: column; justify-content: flex-end; padding-bottom: 4px; }
.sample { width: 60px; height: 32px; display: block; text-align: left; color: #000; font-size: 12px; line-height: 32px; }
.cap { color: #666; line-height: 16px; }
.h1 { font-size: 16px; font-weight: 300; color: #2e74b5; }
.h2 { font-size: 14px; font-weight: 300; color: #2e74b5; }
.title { font-size: 30px; font-weight: 300; line-height: 26px; }
.grey { color: #5a5a5a; }
.it { font-style: italic; }
.soft { color: #404040; }
.blue { color: #5b9bd5; }
.b { font-weight: 700; }
.small { font-size: 11px; }
.lines { border: solid #5b9bd5; border-width: 1px 0; height: 20px; line-height: 18px; margin-bottom: 6px; }
.gscroll { flex: 1; display: flex; flex-direction: column; border-left: 1px solid #ababab; }
.gscroll button { flex: 1; background: #e4e4e4; border-bottom: 1px solid #c6c6c6; }
.gscroll .arr { background: #b0b0b0; }
.gscroll .more { background: linear-gradient(#555, #555) center 6px / 5px 1px no-repeat #fff; border: 0; }
.gscroll .more .arr { background: #555; }
.edit { width: 99px; padding-left: 8px; }
.edit .stack { color: #444; }
.edit footer { padding: 0; margin-left: -8px; }
.collapse { margin: auto 10px 4px auto; }

.doctabs { height: 29px; flex: none; display: flex; align-items: flex-end; border-bottom: 1px solid #a8a8a8; padding-left: 1px; }
.doctab { display: flex; align-items: center; height: 25px; width: 595px; background: #c2d5f2; border: 1px solid #a0a0a0; border-bottom: 0; padding: 0 5px 0 4px; gap: 2px; }
.doctab span { flex: 1; font-weight: 700; color: #333; white-space: nowrap; }
.doctab button { color: #909090; font-size: 16px; font-weight: 700; }
.newtab { width: 27px; height: 21px; background: #fff; border: 1px solid #a8a8a8; border-bottom: 0; margin-left: 1px; }
.tabctl { margin-left: auto; align-self: center; display: flex; gap: 2px; }
.tabctl button { width: 21px; height: 21px; background: #f4f4f4; border: 1px solid #c6c6c6; }

.work { flex: 1; min-height: 0; display: flex; overflow: hidden; }
.vruler { width: 66px; flex: none; display: flex; flex-direction: column; }
.tabsel { width: 18px; height: 16px; margin: 3px 0 0 3px; background: #fff; border: 1px solid #ccc; font: 700 12px/12px "Liberation Sans", sans-serif; color: #666; }
.vr { margin: 20px 0 0 5px; }
.vr text, .hr text { font: 9px "Open Sans", sans-serif; fill: #444; }
.canvas { flex: 1; min-width: 0; padding-top: 2px; }
.pages { margin: 15px 0 0 2px; display: grid; grid-template-columns: repeat(3, 793px); gap: 15px 17px; }
.page { height: 1122px; background: #fff; border: 1px solid #c6c6c6; padding: 78px 55px 0 112px; color: #000; font: 16px/22px "Liberation Sans", Arial, sans-serif; }
.page p { margin: 0 0 10px; white-space: nowrap; }
.line { display: block; text-align: justify; text-align-last: justify; }
.line:first-child { text-indent: 38px; }
.line:last-child { text-align-last: left; }
.page .wide { margin-bottom: 18px; }
.page .r { text-align: right; }
.page .c { text-align: center; margin-bottom: 9px; }
.page .in { text-indent: 38px; }
.page .loose { font-family: "Open Sans", "Noto Sans", sans-serif; line-height: 23px; }
.page .last { margin-bottom: 11px; }
.arial { font-family: "Liberation Sans", Arial, sans-serif; }
.bold { font-weight: 700; }
.spell { background: url("data:image/svg+xml,%3Csvg xmlns='http://www.w3.org/2000/svg' width='4' height='3'%3E%3Cpath d='M-1 3.500L2 .5L5 3.500' fill='none' stroke='%23f00' stroke-width='1.200'/%3E%3C/svg%3E") repeat-x left bottom; }
.gram { background: url("data:image/svg+xml,%3Csvg xmlns='http://www.w3.org/2000/svg' width='4' height='3'%3E%3Cpath d='M-1 3.500L2 .5L5 3.500' fill='none' stroke='%2300f' stroke-width='1.200'/%3E%3C/svg%3E") repeat-x left bottom; }
.caret { display: inline-block; width: 1px; height: 18px; background: #000; vertical-align: -4px; }
.hidden-name { display: flex; flex-direction: column; align-items: flex-end; margin: 14px -5px 8px 0; height: 20px; }
.mrow { display: flex; }
.mrow i { width: 10px; height: 10px; }
.page ol { list-style: none; margin: 0; padding: 0 0 0 38px; }
.page li { display: flex; margin-bottom: 10px; }
.num { width: 24px; }
.sign { display: flex; justify-content: space-between; height: 22px; margin-bottom: 10px; padding-left: 237px; }
.signature { margin: 0 -5px 0 0; }

.vscroll { width: 15px; margin-right: 1px; display: flex; flex-direction: column; padding: 2px 0 3px; }
.vscroll button { height: 14px; background: #fff; border: 1px solid #ababab; }
.track { flex: 1; background: #dadada; padding-top: 1px; }
.thumb { height: 34%; background: #fff; border: 1px solid #ababab; }

.status { height: 22px; flex: none; display: flex; align-items: center; background: #f1f1f1; border-top: 1px solid #c0c0c0; padding: 0 18px 2px 7px; gap: 12px; color: #555; }
.views { margin-left: auto; display: flex; align-self: stretch; margin-bottom: -2px; }
.views button { width: 38px; }
.views .on { background: #c8c8c8; }
.zoom { display: flex; align-items: center; gap: 4px; margin-left: -8px; }
.zoom span { margin-left: 8px; }
.zoom input { appearance: none; width: 100px; height: 12px; margin: 0; background: linear-gradient(#999, #999) center / 100% 1px no-repeat; }
.zoom input::-webkit-slider-thumb { appearance: none; width: 4px; height: 11px; background: #555; }

.behind { width: 15px; display: flex; flex: none; }
.edge-strip { width: 7px; background: linear-gradient(90deg, #b8b4bc, #fff 80%); }
.other { flex: 1; display: flex; flex-direction: column; background: #f4f4f4; border-left: 1px solid #888; }
.dark { height: 36px; background: #2b3a4c; }
.head { height: 56px; background: #fff; border-bottom: 1px solid #ccc; border-top-right-radius: 6px; }
.gut { height: 52px; background: #f1f1f1; }
.bar { height: 234px; width: 5px; background: #808080; border-radius: 0 4px 4px 0; }

.taskbar { height: 40px; flex: none; display: flex; background: linear-gradient(90deg, #e4e4e4, #d4d6d8 8%, #d6d8da 80%, #d0d1d3); }
.app { width: 49px; position: relative; }
.app.start, .app.search { width: 48px; }
.app.tasks { width: 50px; }
.app.alice { width: 62px; }
.app.edge { width: 47px; }
.app.active { background: #eff0f1; }
.app.run::after { content: ""; position: absolute; left: 4px; right: 4px; bottom: 0; height: 2px; background: #0078d7; }
.app.active::after { left: 0; right: 0; }
.app.multi::after { background: linear-gradient(90deg, #0078d7 80%, #6aaee8 80%); }
.tray { margin-left: auto; display: flex; align-items: center; gap: 9px; color: #111; padding-right: 10px; margin-right: 4px; border-right: 1px solid #bbb; }
.clock { display: flex; flex-direction: column; align-items: center; width: 62px; line-height: 18px; }
.note { position: relative; width: 26px; height: 20px; margin-left: 4px; }
.note b { position: absolute; left: 9px; top: 6px; width: 16px; height: 16px; border-radius: 50%; background: #d0d0d0; border: 1px solid #777; font-size: 11px; line-height: 14px; text-align: center; }
</style>
